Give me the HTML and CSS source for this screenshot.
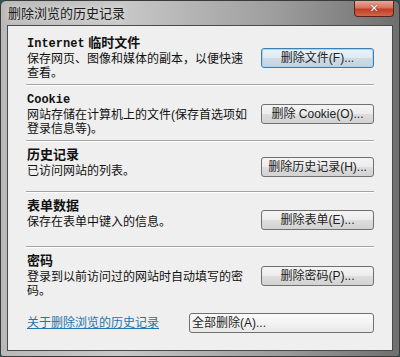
FILE: index.html
```html
<!DOCTYPE html>
<html>
<head>
<meta charset="utf-8">
<title>删除浏览的历史记录</title>
<link rel="stylesheet" href="styles.css">
</head>
<body>
<div class="window">
	<div class="titlebar">
		<span class="caption">删除浏览的历史记录</span>
		<span class="close">&#x2715;</span>
	</div>
	<div class="client">

		<div class="section">
			<div class="info">
				<p class="head"><span class="latin">Internet</span> 临时文件</p>
				<p class="desc">保存网页、图像和媒体的副本，以便快速查看。</p>
			</div>
			<button class="btn focus">删除文件(F)...</button>
		</div>
		<div class="sep"></div>

		<div class="section">
			<div class="info">
				<p class="head"><span class="latin">Cookie</span></p>
				<p class="desc">网站存储在计算机上的文件(保存首选项如登录信息等)。</p>
			</div>
			<button class="btn">删除 Cookie(O)...</button>
		</div>
		<div class="sep"></div>

		<div class="section short">
			<div class="info">
				<p class="head">历史记录</p>
				<p class="desc">已访问网站的列表。</p>
			</div>
			<button class="btn">删除历史记录(H)...</button>
		</div>
		<div class="sep"></div>

		<div class="section single">
			<div class="info">
				<p class="head">表单数据</p>
				<p class="desc">保存在表单中键入的信息。</p>
			</div>
			<button class="btn">删除表单(E)...</button>
		</div>
		<div class="sep"></div>

		<div class="section">
			<div class="info">
				<p class="head">密码</p>
				<p class="desc">登录到以前访问过的网站时自动填写的密码。</p>
			</div>
			<button class="btn">删除密码(P)...</button>
		</div>

		<div class="footer">
			<a class="link" href="#">关于删除浏览的历史记录</a>
			<button class="btn all">全部删除(A)...</button>
		</div>

	</div>
</div>
</body>
</html>
```

FILE: styles.css
```css
body {
	margin: 0;
	background: #2f5252;
	font-family: "Liberation Sans", "Noto Sans CJK SC", sans-serif;
	font-size: 12px;
	color: #111;
}

.window {
	width: 400px;
	height: 357px;
	box-sizing: border-box;
	border: 1px solid #3a3a3a;
	border-radius: 6px 6px 3px 3px;
	background: linear-gradient(to right, #b9b9b9 0%, #c8c8c8 30%, #9c9c9c 70%, #6f6f6f 100%);
	display: flex;
	flex-direction: column;
	padding: 0 6px 5px 6px;
}

.titlebar {
	height: 24px;
	display: flex;
	justify-content: space-between;
	align-items: flex-start;
}

.caption {
	font-size: 13px;
	line-height: 15px;
	margin-top: 5px;
	margin-left: 1px;
	color: #1a1a1a;
	text-shadow: 0 0 6px #f4f4f4;
}

.close {
	width: 40px;
	height: 16px;
	margin-right: -1px;
	box-sizing: border-box;
	border: 1px solid #5b2418;
	border-top: none;
	border-radius: 0 0 4px 4px;
	background: linear-gradient(to bottom, #e9a898 0%, #d7735f 45%, #c23d24 55%, #d0684c 100%);
	color: #fff;
	font-size: 11px;
	font-weight: bold;
	line-height: 15px;
	text-align: center;
	text-shadow: 0 0 2px #5b2418;
	font-family: "DejaVu Sans", sans-serif;
}

.client {
	flex: 1;
	border: 1px solid #4a4a4a;
	background: #efefef;
	padding: 4px 18px 0 18px;
	display: flex;
	flex-direction: column;
}

.section {
	box-sizing: border-box;
	display: flex;
	justify-content: space-between;
	align-items: center;
	padding: 5px 0 4px 1px;
}

.section.short {
	min-height: 49px;
}

.section.single {
	min-height: 53px;
}

.info {
	width: 222px;
	align-self: flex-start;
}

p {
	margin: 0;
}

.head {
	font-weight: bold;
	font-size: 13px;
	line-height: 16px;
	margin-bottom: 1px;
}

.latin {
	font-family: "Liberation Mono", monospace;
	font-size: 12px;
	line-height: 12px;
}

.desc {
	line-height: 14px;
}

.sep {
	height: 1px;
	background: #a5a5a5;
	border-bottom: 1px solid #fff;
}

.btn {
	width: 113px;
	height: 20px;
	box-sizing: border-box;
	border: 1px solid #707070;
	border-radius: 3px;
	background: linear-gradient(to bottom, #f4f4f4 0%, #ececec 50%, #dedede 51%, #d2d2d2 100%);
	font-family: "Liberation Sans", "Noto Sans CJK SC", sans-serif;
	font-size: 12px;
	line-height: 16px;
	color: #222;
	padding: 0;
	white-space: nowrap;
}

.btn.focus {
	border-color: #3c7fb1;
	box-shadow: inset 0 0 0 1px #aad4ee;
	background: linear-gradient(to bottom, #e9f2f8 0%, #dfeaf2 50%, #cddbe6 51%, #c4d4e0 100%);
}

.footer {
	display: flex;
	align-items: center;
	justify-content: space-between;
	padding: 11px 0 0 1px;
}

.link {
	color: #1f74a8;
	text-decoration: underline;
	line-height: 14px;
}

.btn.all {
	width: 185px;
	text-align: left;
	padding-left: 2px;
	background: linear-gradient(to bottom, #fbfbfb 0%, #f3f3f3 50%, #e8e8e8 100%);
}
```
